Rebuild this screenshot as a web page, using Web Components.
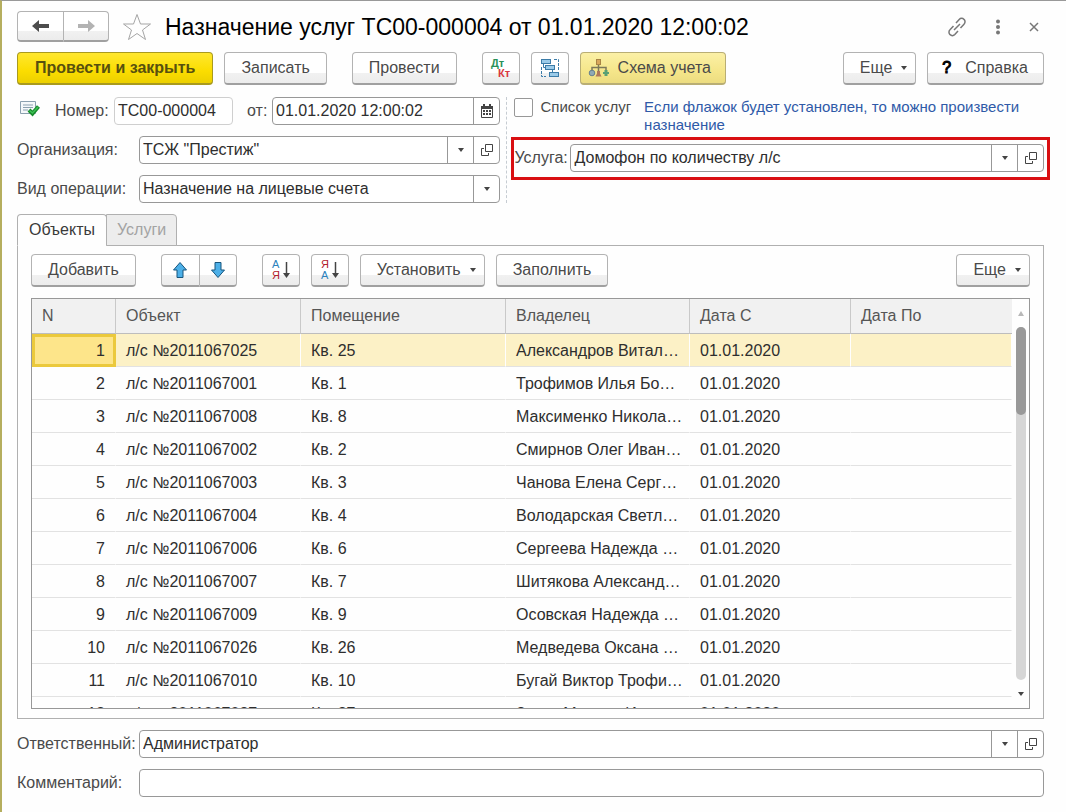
<!DOCTYPE html>
<html lang="ru">
<head>
<meta charset="utf-8">
<meta name="viewport" content="width=device-width, initial-scale=1">
<title>Назначение услуг</title>
<style>
  html, body { margin: 0; height: 100%; }
  body { font: 16px/18px "Liberation Sans", Arial, sans-serif; color: #4a4a4a; background: #fefefe; }
</style>
</head>
<body>
<assign-form></assign-form>

<script>
const define = (name, html, setup) => {
  const template = document.createElement('template');
  template.innerHTML = html;
  customElements.define(name, class extends HTMLElement {
    connectedCallback() {
      if (this.shadowRoot) return;
      const root = this.attachShadow({ mode: 'open' });
      root.append(template.content.cloneNode(true));
      if (setup) setup(this, root);
    }
  });
};

/* ---------- icons ---------- */
const ICONS = {
  back: [18, 14, '<path d="M0 7 7 1v4h10v4H7v4z" fill="#4d4d4d"/>'],
  forward: [18, 14, '<path d="M18 7 11 1v4H1v4h10v4z" fill="#b3b3b3"/>'],
  star: [30, 28, '<path d="M15 1.500 18.500 11H28.500L20.500 17 23.500 26.500 15 20.500 6.500 26.500 9.500 17 1.500 11h10z" fill="none" stroke="#a5a5a5"/>'],
  link: [20, 20, '<g fill="none" stroke="#777" stroke-width="1.500"><path d="M9 6l3.200-3.600a3.300 3.300 0 0 1 4.800 0 3.300 3.300 0 0 1 0 4.800L13.500 11M11 14l-3.200 3.600a3.300 3.300 0 0 1-4.800 0 3.300 3.300 0 0 1 0-4.800L6.500 9M7 13l6-6"/></g>'],
  more: [6, 16, '<g fill="#777"><circle cx="3" cy="2.500" r="2"/><circle cx="3" cy="8" r="2"/><circle cx="3" cy="13.500" r="2"/></g>'],
  close: [10, 10, '<path d="M1 1l8 8M9 1 1 9" stroke="#777" stroke-width="1.500"/>'],
  dtkt: [24, 24, '<g font-family="Liberation Sans, Arial, sans-serif" font-weight="bold" font-size="11"><text x="2" y="11" fill="#2a9158">Дт</text><text x="9" y="21" fill="#d8383e">Кт</text></g>'],
  tree: [20, 20, '<g fill="#9bcbe9" stroke="#3c7ca8"><rect x="1.500" y="1.500" width="9" height="4"/><rect x="5.500" y="7.500" width="9" height="4"/><rect x="9.500" y="14.500" width="9" height="4"/></g><path d="M3.500 6v3.500H5M12.500 12v2" fill="none" stroke="#3c7ca8"/><path d="M14 1.500h4.500V12M1.500 9v9.500H6" fill="none" stroke="#3c7ca8" stroke-dasharray="3 1"/>'],
  scheme: [22, 20, '<path d="M10.500 6v8M4 13V9.500h14V13" fill="none" stroke="#7d7a5a" stroke-width="1.500"/><rect x="8.500" y="1.500" width="4" height="5" fill="#d8a75b" stroke="#a98445"/><circle cx="4" cy="15" r="2.800" fill="#8fa9b5" stroke="#66808d"/><path d="M7.500 18.500 9 15.500V13h3v2.500l1.500 3z" fill="#b0785a"/><path d="M15 14h1.500v-2h3v2H21v2h-1.500v2h-3v-2H15z" fill="#58a074"/>'],
  posted: [20, 18, '<path d="M.500 1.500h15v12H.500z" fill="#f5f8fa" stroke="#8ba0af"/><path d="M3 5h10M3 7.500h10M3 10h5" stroke="#8ba0af"/><path d="M9 10l3.500 3.500L18.500 6.500" fill="none" stroke="#178a2c" stroke-width="4"/><path d="M9.500 10.500l3 2.500L18 7" fill="none" stroke="#3cc154" stroke-width="1.500"/>'],
  calendar: [14, 14, '<path d="M1.500 2.500h11v11h-11z" fill="none" stroke="#444"/><path d="M1 2h12v3H1zM3 0h2v3H3zM9 0h2v3H9z" fill="#444"/><path d="M3 6h2v2H3zM6 6h2v2H6zM9 6h2v2H9zM3 9h2v2H3zM6 9h2v2H6zM9 9h2v2H9z" fill="#444"/>'],
  open: [14, 14, '<path d="M5.500 1.500h7v7h-7zM4 5.500H1.500v7h7V10" fill="none" stroke="#444"/>'],
  caret: [8, 5, '<path d="M1 0h6L4 4z" fill="#444"/>'],
  caretUp: [8, 5, '<path d="M1 5h6L4 0z" fill="#b8b8b8"/>'],
  up: [16, 18, '<path d="M8 1.500 14.500 9H11v7.500H5V9H1.500z" fill="#4db0e8" stroke="#17557d" stroke-linejoin="round"/>'],
  down: [16, 18, '<path d="M8 16.500 14.500 9H11V1.500H5V9H1.500z" fill="#4db0e8" stroke="#17557d" stroke-linejoin="round"/>'],
  sortAsc: [20, 24, '<g font-family="Liberation Sans, Arial, sans-serif" font-size="11"><text x="1" y="10" fill="#2c82bd">А</text><text x="1" y="21" fill="#b3202c">Я</text></g><path d="M15.500 4v12" stroke="#444" stroke-width="1.500"/><path d="M12 15h7l-3.500 5z" fill="#444"/>'],
  sortDesc: [20, 24, '<g font-family="Liberation Sans, Arial, sans-serif" font-size="11"><text x="1" y="10" fill="#b3202c">Я</text><text x="1" y="21" fill="#2c82bd">А</text></g><path d="M15.500 4v12" stroke="#444" stroke-width="1.500"/><path d="M12 15h7l-3.500 5z" fill="#444"/>']
};
const icon = (name) => {
  const [w, h, body] = ICONS[name];
  return `<svg width="${w}" height="${h}" viewBox="0 0 ${w} ${h}" aria-hidden="true">${body}</svg>`;
};
define('ui-icon', '<style>:host{display:inline-flex;flex:none} svg{display:block}</style>',
  (host, root) => root.append(document.createRange().createContextualFragment(icon(host.getAttribute('name')))));

/* ---------- button ---------- */
define('ui-button', `
<style>
  :host { display: inline-flex; flex: none; height: 33px; }
  button {
    flex: 1; display: flex; align-items: center; justify-content: center; gap: 8px;
    box-sizing: border-box; margin: 0; padding: 0 16px; font: inherit; color: #4a4a4a; white-space: nowrap;
    border: 1px solid #b3b3b3; border-bottom: 2px solid #a0a0a0; border-radius: 4px;
    background: linear-gradient(#fff 66%, #f1f1f1 67%, #ececec);
  }
  :host([icon-only]) { width: 38px; }
  :host([nav]) { width: 46px; height: 31px; }
  :host([icon-only]) button, :host([nav]) button { padding: 0; }
  :host([caret]) button { padding: 0 7px 0 16px; gap: 8px; }
  :host([primary]) button { padding: 0 17px; font-weight: bold; color: #57500f; border-color: #a99a1e; background: linear-gradient(#ffe72f, #fbdd00 60%, #ecd000); }
  :host([accent]) button { padding: 0 14px 0 7px; border-color: #b9ae74; background: linear-gradient(#fbf0a6, #f5e68a 60%, #ecdc80); }
  :host([help]) button { gap: 14px; padding: 0 15px 0 14px; }
  :host([first]) button { border-radius: 4px 0 0 4px; border-right-width: 0; }
  :host([last]) button { border-radius: 0 4px 4px 0; }
</style>
<button type="button"><slot></slot></button>`, (host, root) => {
  const b = root.querySelector('button');
  if (host.title) b.setAttribute('aria-label', host.title);
  if (host.hasAttribute('caret')) b.insertAdjacentHTML('beforeend', icon('caret'));
});

/* ---------- labelled field: text box or drop-down with trailing buttons ---------- */
define('ui-field', `
<style>
  :host { display: flex; align-items: center; height: 28px; min-width: 0; }
  label { flex: none; box-sizing: border-box; width: var(--label-width, auto); white-space: nowrap; }
  .box {
    flex: 1; min-width: 0; height: 28px; box-sizing: border-box; display: grid; grid-template-rows: 100%;
    border: 1px solid #989898; border-radius: 4px; background: #fff; overflow: hidden;
  }
  :host([quiet]) .box { border-color: #cfcfcf; }
  input, select {
    grid-row: 1; grid-column: 1; min-width: 0; width: 100%; box-sizing: border-box; margin: 0; border: 0; padding: 0 3px;
    font: inherit; color: #2e2e2e; background: none; appearance: none; outline: none; border-radius: 0;
  }
  select { grid-column: 1 / span 2; }
  .cell {
    grid-row: 1; display: flex; align-items: center; justify-content: center; box-sizing: border-box;
    padding: 0; margin: 0; border: 0; border-left: 1px solid #989898; background: none;
  }
  .arrow { pointer-events: none; }
</style>
<label for="control"></label><div class="box"></div>`, (host, root) => {
  const value = host.getAttribute('value') || '';
  const kinds = (host.getAttribute('buttons') || '').split(' ').filter(Boolean);
  const box = root.querySelector('.box');
  root.querySelector('label').textContent = host.getAttribute('label');
  box.style.gridTemplateColumns = 'minmax(0,1fr) ' + kinds.map(() => '26px').join(' ');
  const control = document.createElement(kinds.includes('caret') ? 'select' : 'input');
  control.id = 'control';
  if (control.localName === 'select') control.add(new Option(value)); else { control.type = 'text'; control.value = value; }
  box.append(control);
  kinds.forEach((kind, i) => {
    const cell = document.createElement(kind === 'caret' ? 'span' : 'button');
    cell.className = kind === 'caret' ? 'cell arrow' : 'cell';
    cell.style.gridColumn = i + 2;
    if (kind !== 'caret') { cell.type = 'button'; cell.setAttribute('aria-label', kind === 'open' ? 'Открыть' : 'Выбрать дату'); }
    cell.innerHTML = icon(kind);
    box.append(cell);
  });
});

/* ---------- check box ---------- */
define('ui-check', `
<style>
  :host { display: flex; flex: none; }
  label { display: flex; align-items: flex-start; gap: 7px; white-space: nowrap; }
  input { appearance: none; margin: 0; box-sizing: border-box; width: 19px; height: 19px; border: 1px solid #989898; border-radius: 2px; background: #fff; }
</style>
<label><input type="checkbox"><slot></slot></label>`);

/* ---------- tabs ---------- */
define('ui-tabs', `
<style>
  :host { display: flex; flex-direction: column; min-height: 0; }
  .tabs { display: flex; z-index: 1; margin-bottom: -1px; }
  button {
    height: 32px; box-sizing: border-box; margin: 0; padding: 0 11px; font: inherit; color: #3a3a3a;
    border: 1px solid #b0b0b0; border-bottom-color: #fefefe; border-radius: 4px 4px 0 0; background: #fefefe;
  }
  button + button { margin-left: -1px; padding: 0 10px; color: #a3a3a3; background: #ededed; border-bottom-color: #b0b0b0; border-top-left-radius: 0; }
  .panel { flex: 1; min-height: 0; display: flex; flex-direction: column; gap: 11px; border: 1px solid #b0b0b0; padding: 8px 13px 9px; }
</style>
<div class="tabs" role="tablist"><button type="button" role="tab" aria-selected="true">Объекты</button><button type="button" role="tab" aria-selected="false">Услуги</button></div>
<div class="panel" role="tabpanel"><slot></slot></div>`);

/* ---------- data grid ---------- */
const ROWS = [
  ['2011067025', '25', 'Александров Витал…'], ['2011067001', '1', 'Трофимов Илья Бо…'],
  ['2011067008', '8', 'Максименко Никола…'], ['2011067002', '2', 'Смирнов Олег Иван…'],
  ['2011067003', '3', 'Чанова Елена Серг…'], ['2011067004', '4', 'Володарская Светл…'],
  ['2011067006', '6', 'Сергеева Надежда …'], ['2011067007', '7', 'Шитякова Александ…'],
  ['2011067009', '9', 'Осовская Надежда …'], ['2011067026', '26', 'Медведева Оксана …'],
  ['2011067010', '10', 'Бугай Виктор Трофи…'], ['2011067027', '27', 'Зотов Максим Ил…']
];
define('data-grid', `
<style>
  :host { display: flex; min-height: 0; border: 1px solid #989898; background: #fefefe; overflow: hidden; }
  .view { flex: 1; min-width: 0; overflow: hidden; }
  table { width: 100%; table-layout: fixed; border-collapse: separate; border-spacing: 0; color: #2e2e2e; }
  th, td { box-sizing: border-box; padding: 0 0 0 10px; text-align: left; font-weight: normal; white-space: nowrap; }
  th { height: 35px; color: #555; background: #f1f1f1; border-bottom: 1px solid #bdbdbd; border-right: 1px solid #c9c9c9; }
  th:last-child { border-right: 0; }
  td { height: 33px; padding-top: 2px; border-bottom: 1px solid #e2e2e2; border-right: 1px solid transparent; }
  td:first-child { text-align: right; padding-right: 10px; }
  tr.current td { background: #fcf1c6; background-clip: padding-box; }
  tr.current td:first-child { padding-top: 0; padding-right: 8px; background: #fde58a; border: 3px solid #ebc93c; }
  .bar { flex: none; width: 17px; display: flex; flex-direction: column; align-items: center; }
  .bar button { flex: none; height: 28px; width: 100%; padding: 0; border: 0; background: none; display: flex; align-items: center; justify-content: center; }
  .track { flex: 1; width: 10px; border-radius: 5px; background: #d6d6d6; }
  .thumb { height: 25%; border-radius: 5px; background: #999; }
</style>
<div class="view"><table>
  <colgroup><col style="width:84px"><col style="width:185px"><col style="width:205px"><col style="width:184px"><col style="width:161px"><col></colgroup>
  <thead><tr><th>N</th><th>Объект</th><th>Помещение</th><th>Владелец</th><th>Дата С</th><th>Дата По</th></tr></thead>
  <tbody></tbody>
</table></div>
<div class="bar"><button type="button" aria-label="Вверх">${icon('caretUp')}</button><div class="track"><div class="thumb"></div></div><button type="button" aria-label="Вниз">${icon('caret')}</button></div>`,
(host, root) => {
  root.querySelector('tbody').innerHTML = ROWS.map(([account, flat, owner], i) =>
    `<tr${i ? '' : ' class="current"'}><td>${i + 1}</td><td>л/с №${account}</td><td>Кв. ${flat}</td><td>${owner}</td><td>01.01.2020</td><td></td></tr>`).join('');
});

/* ---------- highlighted frame ---------- */
define('mark-frame', `
<style>
  :host { display: block; position: relative; }
  .frame { position: absolute; inset: -7px -6px -8px -3px; border: 3px solid #d90f12; pointer-events: none; }
</style>
<slot></slot><div class="frame"></div>`);

/* ---------- document form ---------- */
define('assign-form', `
<style>
  :host { display: flex; flex-direction: column; box-sizing: border-box; height: 100vh; min-height: 480px; padding: 10px 22px 15px 15px; border-left: 2px solid #b5ae5e; border-top: 1px solid #999; }
  header, .bar { display: flex; align-items: center; }
  header { height: 31px; gap: 13px; }
  h1 { flex: 1; margin: 0; font-size: 23px; line-height: 28px; font-weight: normal; color: #000; white-space: nowrap; }
  .pair, .window { display: flex; align-items: center; }
  .plain { display: flex; padding: 0; border: 0; background: none; }
  .window { gap: 28px; padding-right: 5px; }
  .bar { gap: 11px; }
  .commands { margin: 10px 0 12px; }
  .wide { margin-left: 14px; }
  .push { margin-left: auto; }
  .fields { display: grid; grid-template-columns: minmax(0, 483fr) 1px minmax(0, 530fr); column-gap: 6px; margin-bottom: 11px; }
  .left { display: flex; flex-direction: column; gap: 11px; --label-width: 122px; }
  .number { display: flex; align-items: center; --label-width: auto; }
  .number ui-icon { align-self: flex-start; margin: 3px 15px 0 3px; }
  .no { width: 178px; --label-width: 59px; }
  .date { flex: 1; margin-left: 14px; --label-width: 25px; }
  .rule { border-left: 1px dashed #c6ccd2; }
  .right { display: flex; flex-direction: column; gap: 10px; padding: 1px 0 0 1px; }
  .note { display: flex; gap: 13px; font-size: 15px; }
  .note p { margin: 0; color: #2f5aa8; }
  .right ui-field { --label-width: 56px; }
  ui-tabs { flex: 1; margin-bottom: 11px; }
  data-grid { flex: 1; }
  .foot { display: flex; flex-direction: column; gap: 11px; --label-width: 122px; }
  .q { color: #000; -webkit-text-stroke: 1px #000; }
</style>
<header>
  <div class="pair"><ui-button nav first title="Назад"><ui-icon name="back"></ui-icon></ui-button><ui-button nav last title="Вперед"><ui-icon name="forward"></ui-icon></ui-button></div>
  <button class="plain" type="button" aria-label="Избранное"><ui-icon name="star"></ui-icon></button>
  <h1>Назначение услуг ТС00-000004 от 01.01.2020 12:00:02</h1>
  <div class="window">
    <button class="plain" type="button" aria-label="Ссылка"><ui-icon name="link"></ui-icon></button>
    <button class="plain" type="button" aria-label="Меню"><ui-icon name="more"></ui-icon></button>
    <button class="plain" type="button" aria-label="Закрыть"><ui-icon name="close"></ui-icon></button>
  </div>
</header>
<div class="bar commands">
  <ui-button primary>Провести и закрыть</ui-button>
  <ui-button>Записать</ui-button>
  <ui-button class="wide">Провести</ui-button>
  <ui-button class="wide" icon-only title="Проводки"><ui-icon name="dtkt"></ui-icon></ui-button>
  <ui-button icon-only title="Структура"><ui-icon name="tree"></ui-icon></ui-button>
  <ui-button accent><ui-icon name="scheme"></ui-icon>Схема учета</ui-button>
  <ui-button class="push" caret>Еще</ui-button>
  <ui-button help><span class="q">?</span>Справка</ui-button>
</div>
<div class="fields">
  <div class="left">
    <div class="number">
      <ui-icon name="posted"></ui-icon>
      <ui-field class="no" quiet label="Номер:" value="ТС00-000004"></ui-field>
      <ui-field class="date" label="от:" value="01.01.2020 12:00:02" buttons="calendar"></ui-field>
    </div>
    <ui-field label="Организация:" value='ТСЖ "Престиж"' buttons="caret open"></ui-field>
    <ui-field label="Вид операции:" value="Назначение на лицевые счета" buttons="caret"></ui-field>
  </div>
  <div class="rule"></div>
  <div class="right">
    <div class="note"><ui-check>Список услуг</ui-check><p>Если флажок будет установлен, то можно произвести назначение</p></div>
    <mark-frame><ui-field label="Услуга:" value="Домофон по количеству л/с" buttons="caret open"></ui-field></mark-frame>
  </div>
</div>
<ui-tabs>
  <div class="bar">
    <ui-button>Добавить</ui-button>
    <div class="pair wide"><ui-button icon-only first title="Переместить вверх"><ui-icon name="up"></ui-icon></ui-button><ui-button icon-only last title="Переместить вниз"><ui-icon name="down"></ui-icon></ui-button></div>
    <ui-button class="wide" icon-only title="По возрастанию"><ui-icon name="sortAsc"></ui-icon></ui-button>
    <ui-button icon-only title="По убыванию"><ui-icon name="sortDesc"></ui-icon></ui-button>
    <ui-button caret>Установить</ui-button>
    <ui-button>Заполнить</ui-button>
    <ui-button class="push" caret>Еще</ui-button>
  </div>
  <data-grid></data-grid>
</ui-tabs>
<div class="foot">
  <ui-field label="Ответственный:" value="Администратор" buttons="caret open"></ui-field>
  <ui-field label="Комментарий:"></ui-field>
</div>`);
</script>
</body>
</html>
